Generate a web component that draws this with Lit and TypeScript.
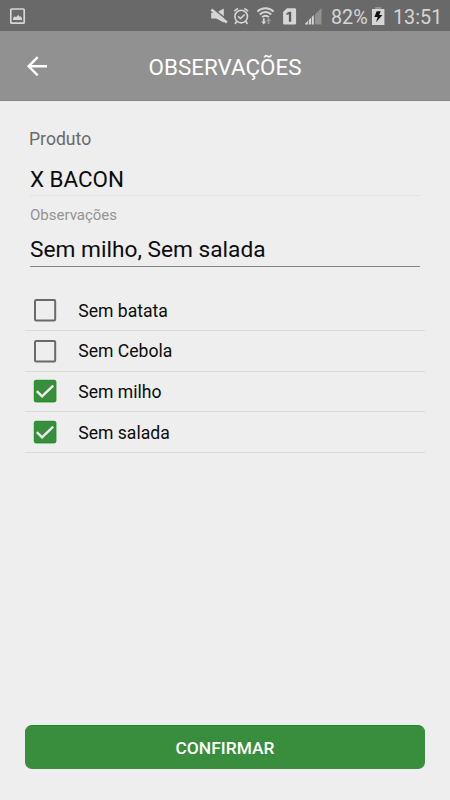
import { LitElement, html, css, svg } from "lit";
import { customElement } from "lit/decorators.js";
import { classMap } from "lit/directives/class-map.js";

@customElement("status-bar")
class StatusBar extends LitElement {
  static styles = css`
    :host { display: flex; height: 31px; flex: none; background: #696969; color: #d6d6d6; }
    svg { display: block; flex: none; }
    .left { width: 200px; }
    .battery { font-size: 19.8px; line-height: 35px; width: 39px; margin-left: 6px; }
    .cell { margin-left: 1px; }
    .time { font-size: 19.8px; line-height: 35px; margin-left: 8px; }
    span { white-space: nowrap; }
  `;
  render() {
    return html`
      <svg class="left" width="200" height="31" viewBox="0 0 200 31">
        <rect x="10.8" y="9" width="13.4" height="14.2" rx=".8" fill="none" stroke="#d6d6d6" stroke-width="1.7"/>
        <path d="M13 20v-1.7l1.6-2.1 1.5 1 2.1-2.4 1.3 2 1.1-.6 1.4 2V20z" fill="#d6d6d6"/>
      </svg>
      <svg width="125" height="31" viewBox="200 0 125 31">
        <path d="M211.2 12.8h5l7.6-4.3v14l-7.6-4h-5z" fill="#d6d6d6"/>
        <path d="M213.2 8.6l14.8 12" stroke="#696969" stroke-width="1.6"/>
        <path d="M211.4 9.6l15.4 12.9" stroke="#d6d6d6" stroke-width="2.6"/>
        <g fill="none" stroke="#d6d6d6" stroke-width="1.6">
          <circle cx="241.2" cy="16.6" r="6.3"/>
          <path d="M234.3 11.2a13 13 0 0 1 3.8-2.7M248.1 11.2a13 13 0 0 0-3.8-2.7M236.7 21.3l-1.7 2.7M245.7 21.3l1.7 2.7"/>
          <path d="M238.1 16.3l2.4 2.2 4.2-4"/>
        </g>
        <g fill="none" stroke="#d6d6d6" stroke-width="1.9">
          <path d="M257.4 11.6a11.5 11.5 0 0 1 16.2 0"/>
          <path d="M259.8 14.5a7.9 7.9 0 0 1 11.4 0"/>
          <path d="M262.2 17.2a4.6 4.6 0 0 1 6.6 0"/>
        </g>
        <path d="M262.9 18.2h1.8v3.2h1.5l-2.4 3.2-2.5-3.2h1.6z" fill="#d6d6d6"/>
        <path d="M267.6 24v-3h-1.4l2.4-3.2 2.5 3.2h-1.6v3z" fill="#9c9c9c"/>
        <path d="M287 8.3h7.9a1.2 1.2 0 0 1 1.2 1.2v13.8a1.2 1.2 0 0 1-1.2 1.2h-10.6a1.2 1.2 0 0 1-1.2-1.2V12z" fill="#d6d6d6"/>
        <path d="M286.6 13l2.9-1.2h1.7v10h-2.3v-7.5l-2.3.8z" fill="#5c5c5c"/>
        <path d="M321.5 8v16.5H315V14.5z" fill="#929292"/>
        <path d="M305.2 24.5v-1l2.7-2.7v3.7zM308.8 24.5v-4.6l2.2-2.2v6.8zM311.8 24.5v-7.6l2-2v9.6z" fill="#d6d6d6"/>
      </svg>
      <span class="battery">82%</span>
      <svg class="cell" width="14" height="31" viewBox="371 0 14 31">
        <rect x="375.2" y="7" width="6" height="2.3" fill="#929292"/>
        <rect x="372" y="9" width="12.4" height="16" fill="#d6d6d6"/>
        <path d="M376.7 11.3h4l-1.5 3.6h3.2l-6.4 7.4 1.7-5.2h-3.3z" fill="#111"/>
      </svg>
      <span class="time">13:51</span>
    `;
  }
}

@customElement("check-row")
class CheckRow extends LitElement {
  static properties = { label: {}, checked: { type: Boolean } };
  declare label: string;
  declare checked: boolean;
  static styles = css`
    :host {
      display: flex; align-items: center; box-sizing: border-box; height: 40.67px;
      border-bottom: 1px solid #d9d9d9; padding-left: 8px;
      font-size: 17.6px; color: #0c0c0c; cursor: pointer;
    }
    .box { display: block; flex: none; margin-right: 21.2px; }
    .frame { fill: none; stroke: #696969; stroke-width: 2; }
    .on .frame { fill: #388e3c; stroke: #188d1f; stroke-width: 1; }
    .tick { fill: none; stroke: none; }
    .on .tick { stroke: #eee; stroke-width: 2.4; }
    .label { white-space: nowrap; line-height: 24px; padding-top: 1px; }
  `;
  render() {
    return html`
      <svg class=${classMap({ box: true, on: this.checked })} width="24" height="24" viewBox="0 0 24 24">
        ${this.checked
          ? svg`<rect class="frame" x="1.3" y="1.3" width="21.6" height="21.6" rx="1.6"/>`
          : svg`<rect class="frame" x="2" y="2" width="20.2" height="20.4" rx="1.2"/>`}
        <path class="tick" d="M3.8 12.2l5.3 5.2L20.2 6.6"/>
      </svg>
      <span class="label">${this.label}</span>
    `;
  }
}

@customElement("app-root")
class AppRoot extends LitElement {
  static properties = { items: { state: true } };
  declare items: { label: string; checked: boolean }[];
  constructor() {
    super();
    this.items = [
      { label: "Sem batata", checked: false },
      { label: "Sem Cebola", checked: false },
      { label: "Sem milho", checked: true },
      { label: "Sem salada", checked: true },
    ];
  }
  static styles = css`
    :host {
      display: flex; flex-direction: column; height: 800px; box-sizing: border-box;
      background: #eee; font-family: Roboto, sans-serif; color: #0c0c0c; overflow: hidden;
    }
    .bar {
      display: grid; grid-template-columns: 75px 1fr 75px; align-items: center;
      height: 70px; flex: none; box-sizing: border-box;
      background: #919191; border-bottom: 1px solid #858585; color: #fff;
    }
    .back { display: block; margin-left: 25px; }
    .title { margin: 0; text-align: center; font-weight: 400; font-size: 22.4px; line-height: 30px; padding-top: 2px; white-space: nowrap; }
    .form { display: flex; flex-direction: column; padding: 27px 30px 0; }
    .caption { font-size: 17.6px; line-height: 22px; color: #696969; margin-left: -1px; }
    .product { font-size: 22.4px; line-height: 28px; margin-top: 15px; padding-bottom: 2px; border-bottom: 1px solid #e3e3e3; }
    .hint { font-size: 15px; line-height: 18px; color: #939393; margin-top: 10px; }
    .notes { font-size: 22.7px; line-height: 28px; margin-top: 12px; padding-bottom: 2px; border-bottom: 1px solid #868686; }
    .list { padding: 0 25px; margin-top: 23.3px; }
    .confirm {
      margin: auto 25px 31px; height: 44px; border: 0; border-top: 1px solid #188d1f; border-radius: 7px; padding: 0;
      box-sizing: border-box; background: #388e3c; color: #fff; flex: none;
      font: 500 17.4px/24px Roboto, sans-serif;
    }
  `;
  private toggle(i: number) {
    this.items = this.items.map((it, n) => (n === i ? { ...it, checked: !it.checked } : it));
  }
  render() {
    const notes = this.items.filter((i) => i.checked).map((i) => i.label).join(", ");
    return html`
      <status-bar></status-bar>
      <header class="bar">
        <svg class="back" width="24" height="24" viewBox="0 0 24 24" fill="none" stroke="#fff" stroke-width="2.4">
          <path d="M22 12.3H3.8M12.7 3.2l-9.1 9.1 9.1 9.1"/>
        </svg>
        <h1 class="title">OBSERVAÇÕES</h1>
      </header>
      <section class="form">
        <div class="caption"><span>Produto</span></div>
        <div class="product"><span>X BACON</span></div>
        <div class="hint"><span>Observações</span></div>
        <div class="notes"><span>${notes}</span></div>
      </section>
      <section class="list">
        ${this.items.map((it, i) => html`<check-row .label=${it.label} .checked=${it.checked} @click=${() => this.toggle(i)}></check-row>`)}
      </section>
      <button class="confirm">CONFIRMAR</button>
    `;
  }
}
